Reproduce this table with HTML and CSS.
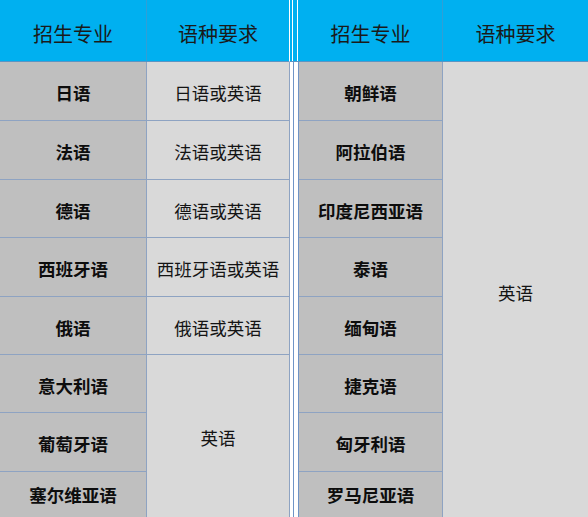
FILE: index.html
```html
<!DOCTYPE html>
<html lang="zh-CN">
<head>
<meta charset="utf-8">
<title>招生专业</title>
<link rel="stylesheet" href="styles.css">
</head>
<body>
<div class="sheet">
  <div class="hd">招生专业</div>
  <div class="hd">语种要求</div>
  <div class="sep-hd"></div>
  <div class="hd">招生专业</div>
  <div class="hd hd-last">语种要求</div>

  <div class="sep-body"></div>
  <div class="req-merged">英语</div>

  <div class="major">日语</div><div class="req">日语或英语</div><div class="major major-r">朝鲜语</div>
  <div class="major">法语</div><div class="req">法语或英语</div><div class="major major-r">阿拉伯语</div>
  <div class="major">德语</div><div class="req">德语或英语</div><div class="major major-r">印度尼西亚语</div>
  <div class="major">西班牙语</div><div class="req">西班牙语或英语</div><div class="major major-r">泰语</div>
  <div class="major">俄语</div><div class="req">俄语或英语</div><div class="major major-r">缅甸语</div>
  <div class="major">意大利语</div><div class="req req-left-merged">英语</div><div class="major major-r">捷克语</div>
  <div class="major">葡萄牙语</div><div class="major major-r">匈牙利语</div>
  <div class="major last">塞尔维亚语</div><div class="major major-r last">罗马尼亚语</div>
</div>
</body>
</html>
```
FILE: styles.css
```css
html, body {
  margin: 0;
  padding: 0;
  background: #ffffff;
  overflow: hidden;
}

.sheet {
  display: grid;
  grid-template-columns: 147px 143px 9px 144px 145px;
  grid-template-rows: 62px 59px 59px 58px 59px 58px 58px 59px 46px;
  grid-auto-flow: row dense;
  width: 588px;
  font-family: "Noto Sans CJK SC", "Microsoft YaHei", sans-serif;
}

.sheet > div {
  box-sizing: border-box;
  display: flex;
  align-items: center;
  justify-content: center;
  padding-top: 4px;
  line-height: 1;
}

.hd {
  background: #00b0f0;
  color: #1a1a1a;
  font-size: 20px;
  font-weight: 400;
  border-right: 1px solid #2f9fd6;
  border-bottom: 1px solid #5a95c4;
  padding-top: 7px !important;
}

.hd:nth-child(2) {
  border-right: 1px solid #ffffff;
}

.hd-last {
  border-right: none;
}

.sep-hd {
  background: #00b0f0 linear-gradient(to right,
    transparent 2px, #ffffff 2px, #ffffff 3px, transparent 3px,
    transparent 7px, #ffffff 7px, #ffffff 8px, transparent 8px);
  border-bottom: 1px solid #5a95c4;
}

.sep-body {
  grid-column: 3;
  grid-row: 2 / 10;
  background: #ffffff linear-gradient(to right,
    transparent 3px, #6f94c6 3px, #6f94c6 4px, transparent 4px);
  border-right: 1px solid #6f94c6;
}

.major {
  grid-column: 1;
  background: #bfbfbf;
  color: #0d0d0d;
  font-size: 17.5px;
  font-weight: 700;
  border-right: 1px solid #8ea3c2;
  border-bottom: 1px solid #8ea3c2;
}

.major-r {
  grid-column: 4;
}

.major.last {
  padding-top: 1px;
}

.req {
  grid-column: 2;
  background: #d9d9d9;
  color: #141414;
  font-size: 17.5px;
  font-weight: 400;
  border-right: 1px solid #8ea3c2;
  border-bottom: 1px solid #8ea3c2;
}

.req-left-merged {
  grid-row: 7 / 10;
  padding-top: 3px !important;
}

.req-merged {
  grid-column: 5;
  grid-row: 2 / 10;
  background: #d9d9d9;
  color: #141414;
  font-size: 17.5px;
  padding-top: 5px !important;
}
```
